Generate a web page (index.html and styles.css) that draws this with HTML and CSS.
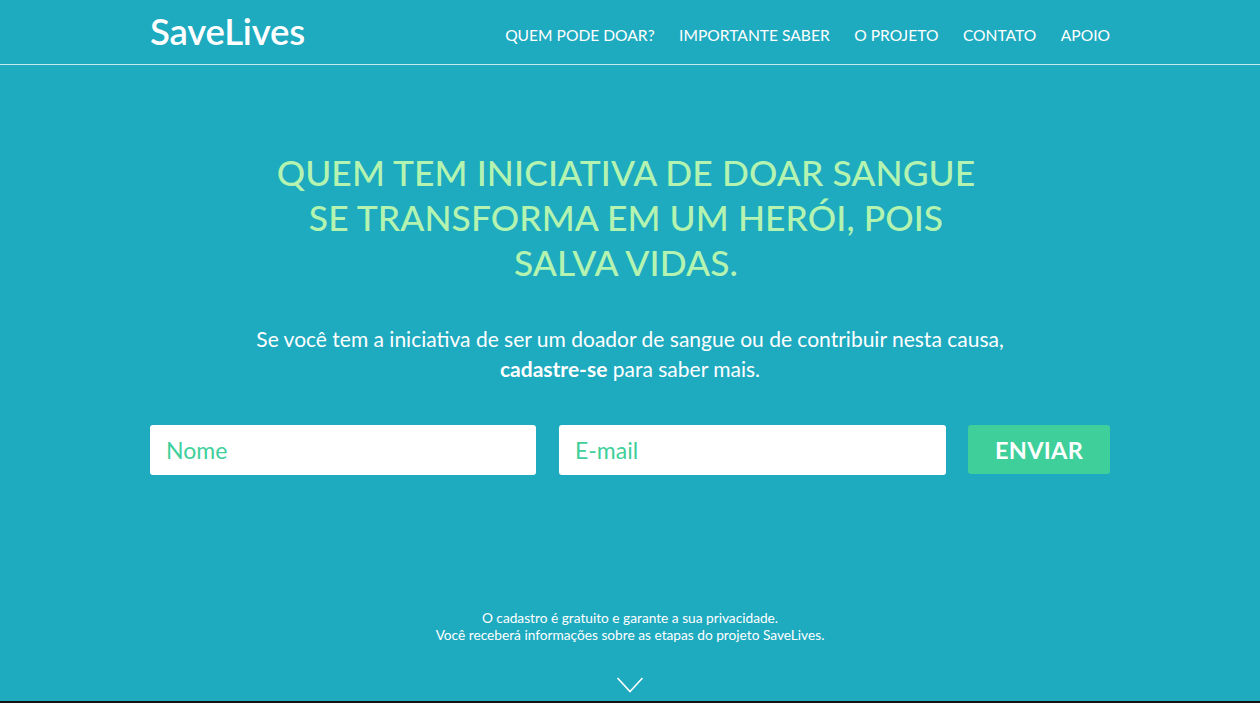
FILE: index.html
```html
<!DOCTYPE html>
<html lang="pt-BR">
<head>
<meta charset="utf-8">
<title>SaveLives</title>
<link rel="stylesheet" href="styles.css">
</head>
<body>
<section class="hero">
  <header class="topbar">
    <div class="container bar">
      <a class="logo" href="#">SaveLives</a>
      <nav class="nav">
        <a href="#">QUEM PODE DOAR?</a>
        <a href="#">IMPORTANTE SABER</a>
        <a href="#">O PROJETO</a>
        <a href="#">CONTATO</a>
        <a href="#">APOIO</a>
      </nav>
    </div>
  </header>
  <div class="container content">
    <h1 class="headline">QUEM TEM INICIATIVA DE DOAR SANGUE<br>SE TRANSFORMA EM UM HERÓI, POIS<br>SALVA VIDAS.</h1>
    <p class="lead">Se você tem a iniciativa de ser um doador de sangue ou de contribuir nesta causa,<br><strong>cadastre-se</strong> para saber mais.</p>
    <form class="signup">
      <input class="field field-name" type="text" placeholder="Nome">
      <input class="field field-mail" type="email" placeholder="E-mail">
      <button class="send" type="button">ENVIAR</button>
    </form>
    <p class="note">O cadastro é gratuito e garante a sua privacidade.<br>Você receberá informações sobre as etapas do projeto SaveLives.</p>
    <div class="chevron">
      <svg width="28" height="18" viewBox="0 0 28 18"><path d="M1.5 2 L14 15.5 L26.5 2" fill="none" stroke="#ffffff" stroke-width="1.6"/></svg>
    </div>
  </div>
</section>
</body>
</html>
```
FILE: styles.css
```css
* { box-sizing: border-box; }
html, body { margin: 0; padding: 0; }
body {
  background: #111;
  font-family: Lato, "Open Sans", sans-serif;
  color: #fff;
}
.hero {
  background: #1eaabf;
  height: 701px;
  display: flex;
  flex-direction: column;
}
.container {
  width: 960px;
  margin: 0 auto;
}
.topbar {
  border-bottom: 1px solid rgba(255,255,255,0.75);
  height: 65px;
}
.bar {
  display: flex;
  align-items: center;
  justify-content: space-between;
  height: 64px;
}
.logo {
  color: #fff;
  text-decoration: none;
  font-size: 36.5px;
  font-weight: 600;
  letter-spacing: -0.2px;
  margin-top: -2px;
}
.nav {
  display: flex;
  gap: 24.5px;
  margin-top: 6px;
}
.nav a {
  color: #fff;
  text-decoration: none;
  font-size: 15.6px;
}
.content {
  display: flex;
  flex-direction: column;
  align-items: center;
  flex: 1;
}
.headline {
  margin: 85px 0 0;
  padding-right: 8px;
  font-size: 35.4px;
  font-weight: 500;
  line-height: 45px;
  color: #b4f4b0;
  text-align: center;
  letter-spacing: 0.1px;
}
.lead {
  margin: 39px 0 0;
  font-size: 21px;
  line-height: 30px;
  text-align: center;
}
.lead strong { font-weight: 700; }
.signup {
  display: flex;
  width: 960px;
  gap: 23px;
  margin-top: 41px;
  align-items: flex-start;
}
.field {
  height: 50px;
  border: none;
  border-radius: 3px;
  background: #fff;
  padding: 0 16px;
  font-family: Lato, sans-serif;
  font-size: 23px;
  color: #3ecf9b;
  outline: none;
}
.field-name { width: 386px; }
.field-mail { width: 387px; }
.field::placeholder { color: #3ecf9b; }
.send {
  width: 142px;
  height: 49px;
  margin-left: -1px;
  border: none;
  border-radius: 3px;
  background: #3ecf9b;
  color: #fff;
  font-family: Lato, sans-serif;
  font-size: 23.5px;
  font-weight: 700;
  letter-spacing: 0.3px;
}
.note {
  margin: 134px 0 0;
  font-size: 13.7px;
  line-height: 17px;
  text-align: center;
}
.chevron {
  margin-top: 33px;
  display: flex;
  justify-content: center;
}
```
